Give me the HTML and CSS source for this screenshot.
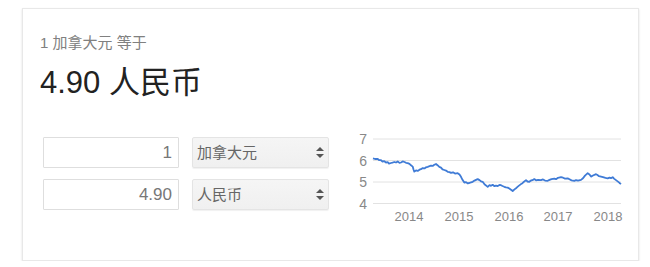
FILE: index.html
```html
<!DOCTYPE html>
<html>

<head>
    <title>货币换算</title>
    <link rel="stylesheet" href="styles.css">
</head>

<body>
    <div class="card">
        <div class="sub-line">1 加拿大元 等于</div>
        <div class="result">4.90 人民币</div>

        <div class="converter">
            <div class="fields">
                <div class="field-row">
                    <input class="amount" value="1">
                    <span class="select-wrap">
                        <select class="currency">
                            <option>加拿大元</option>
                        </select>
                        <svg class="arrows" width="8" height="11" viewBox="0 0 8 11">
                            <path d="M4 0 L8 4 L0 4 Z" />
                            <path d="M0 7 L8 7 L4 11 Z" />
                        </svg>
                    </span>
                </div>
                <div class="field-row">
                    <input class="amount" value="4.90">
                    <span class="select-wrap">
                        <select class="currency">
                            <option>人民币</option>
                        </select>
                        <svg class="arrows" width="8" height="11" viewBox="0 0 8 11">
                            <path d="M4 0 L8 4 L0 4 Z" />
                            <path d="M0 7 L8 7 L4 11 Z" />
                        </svg>
                    </span>
                </div>
            </div>

            <svg class="chart" width="280" height="100" viewBox="0 0 280 100">
                <g class="grid">
                    <line x1="22" y1="11" x2="270" y2="11" />
                    <line x1="22" y1="32.5" x2="270" y2="32.5" />
                    <line x1="22" y1="54" x2="270" y2="54" />
                    <line x1="22" y1="75.5" x2="270" y2="75.5" />
                </g>
                <g class="y-labels">
                    <text x="16" y="16">7</text>
                    <text x="16" y="37.5">6</text>
                    <text x="16" y="59">5</text>
                    <text x="16" y="80.5">4</text>
                </g>
                <g class="x-labels">
                    <text x="58" y="93">2014</text>
                    <text x="108" y="93">2015</text>
                    <text x="158" y="93">2016</text>
                    <text x="207" y="93">2017</text>
                    <text x="257" y="93">2018</text>
                </g>
                <polyline class="rate-line" points="22,30.3 24,31 26.7,30.8 28,32 30,32.2 31.5,33.5 33.3,33.2 35,34.5 36.7,34.2 38,35.6 40,35 41.5,34.6 43.3,34 45,34.5 46.7,33.5 48.5,34.9 50,34.5 51.7,33.4 53.5,34 55,34.8 56.7,35.1 58.5,35.8 60,37.3 61.7,38.6 62.5,41.5 63.3,43.6 65,42.4 66.7,42.9 68.5,41.7 70,41.2 71.7,40.1 73.5,40.4 75,39.3 76.7,38.8 78.5,38.2 80,37.6 81.7,37.9 83.3,36.8 85,36 86.5,37.2 88.3,38.9 90,39.6 91.5,41.4 93.3,42 95,42.6 97,43.9 98.5,44.1 100,44.9 102,44.3 104,45.6 106.7,45.2 108.5,46.5 110,48.8 111.5,51.8 113.3,54.6 115,54.1 116.5,55.3 118.3,55 120,54.4 121.7,53.8 123.5,52.6 125,51.9 126.7,51.1 128.5,52.1 130,53.3 131.7,53.8 133.5,56.3 135,57.4 136.7,58.9 138.5,57.2 140,57.8 141.7,56.8 143.5,58.2 145,57.6 146.7,58.1 148.5,56.9 150,57.2 151.5,58 153.3,58.8 155,59.4 156.7,59.6 158.3,60.5 160,61.7 161.7,63 163.5,61.4 165,60.2 166.5,58.9 168,57.6 170,56.1 171.5,55.2 173,53.7 175,52.1 176.5,53.5 178.3,53.8 180,52.5 181.5,52.2 183.3,51.1 185,52.3 187,51.8 190,52.2 192,51.4 194,52.6 196.7,52.8 198.5,51.9 200.5,51.1 203.3,50.6 205,51.2 207,49.8 210,49.2 212,49.7 214,50.6 216.7,50.4 218.5,51.3 220.5,52.4 223.3,52.8 225,52.1 227,52.7 230,51.9 232,50.3 234,47.6 236.7,45.2 238.5,46.4 240,48.6 242,47.5 243.5,46.8 245,46.2 246.5,47.1 248,48.2 250,48.7 252,49.2 254.5,49.9 256.7,50.3 258.5,49.6 260,50.1 261.7,49.2 263,50.6 265,52.1 267,53.6 268.5,54.9 270,56" />
            </svg>
        </div>
    </div>
</body>

</html>
```

FILE: styles.css
```css
body {
    margin: 0;
    padding: 8px 11px 0 22px;
    font-family: Arial, "Liberation Sans", "Noto Sans CJK SC", sans-serif;
    background: #fff;
}

.card {
    box-sizing: border-box;
    width: 617px;
    height: 253px;
    padding: 24px 0 0 17px;
    border: 1px solid #e8e8e8;
    box-shadow: 0 1px 2px rgba(0, 0, 0, 0.12);
    background: #fff;
}

.sub-line {
    font-size: 15px;
    line-height: 20px;
    color: #808080;
}

.result {
    margin-top: 12px;
    font-size: 31px;
    line-height: 36px;
    color: #222;
}

.converter {
    display: flex;
    margin-top: 27px;
}

.fields {
    display: flex;
    flex-direction: column;
    flex-shrink: 0;
    gap: 11px;
    padding-top: 9px;
    margin-left: 3px;
}

.field-row {
    display: flex;
    gap: 13px;
}

.amount {
    box-sizing: border-box;
    width: 136px;
    height: 31px;
    padding: 0 6px;
    border: 1px solid #dedede;
    border-radius: 1px;
    text-align: right;
    font-family: Arial, "Liberation Sans", sans-serif;
    font-size: 17px;
    color: #777;
    outline: none;
}

.select-wrap {
    position: relative;
    display: block;
}

.currency {
    box-sizing: border-box;
    width: 137px;
    height: 31px;
    padding: 0 20px 0 4px;
    appearance: none;
    -webkit-appearance: none;
    border: 1px solid #e4e4e4;
    border-radius: 2px;
    background: linear-gradient(#f5f5f5, #f0f0f0);
    box-shadow: 0 1px 1px rgba(0, 0, 0, 0.06);
    font-family: Arial, "Noto Sans CJK SC", sans-serif;
    font-size: 15px;
    color: #666;
    outline: none;
}

.arrows {
    position: absolute;
    right: 5px;
    top: 10px;
    fill: #555;
    pointer-events: none;
}

.chart {
    display: block;
    flex-shrink: 0;
    margin-left: 22px;
}

.grid line {
    stroke: #e2e2e2;
    stroke-width: 1;
}

.y-labels text {
    font-family: Arial, "Liberation Sans", sans-serif;
    font-size: 14px;
    fill: #888;
    text-anchor: end;
}

.x-labels text {
    font-family: Arial, "Liberation Sans", sans-serif;
    font-size: 13px;
    fill: #888;
    text-anchor: middle;
}

.rate-line {
    fill: none;
    stroke: #3f7bd6;
    stroke-width: 1.8;
    stroke-linejoin: round;
}
```
